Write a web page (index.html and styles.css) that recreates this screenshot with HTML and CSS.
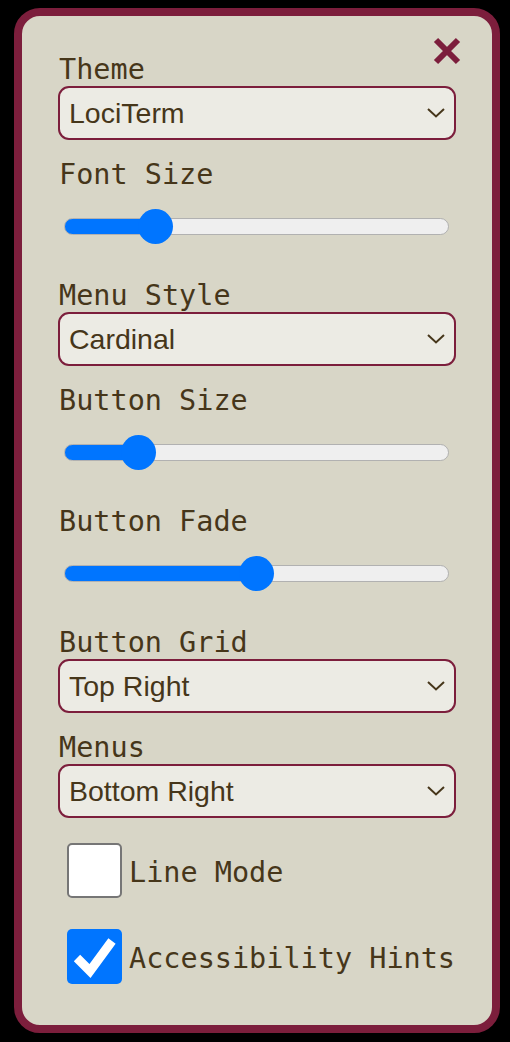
FILE: index.html
```html
<!DOCTYPE html>
<html lang="en">
<head>
  <meta charset="UTF-8">
  <title>Settings</title>
  <link rel="stylesheet" href="styles.css">
</head>
<body>
  <div class="panel">
    <button class="close" type="button" aria-label="Close">
      <svg width="28" height="28" viewBox="0 0 28 28">
        <path d="M3 3 L25 25 M25 3 L3 25" stroke="#7c1e3c" stroke-width="6" fill="none"/>
      </svg>
    </button>

    <div class="field">
      <label class="caption">Theme</label>
      <div class="select-wrap">
        <select class="select">
          <option>LociTerm</option>
        </select>
        <svg class="chevron" width="18" height="10" viewBox="0 0 18 10"><path d="M1 1 L9 8.5 L17 1" stroke="#46361a" stroke-width="2" fill="none"/></svg>
      </div>
    </div>

    <div class="field">
      <label class="caption">Font Size</label>
      <input class="slider" type="range" min="0" max="100" value="20.8" style="--fill:23.5%">
    </div>

    <div class="field">
      <label class="caption">Menu Style</label>
      <div class="select-wrap">
        <select class="select">
          <option>Cardinal</option>
        </select>
        <svg class="chevron" width="18" height="10" viewBox="0 0 18 10"><path d="M1 1 L9 8.5 L17 1" stroke="#46361a" stroke-width="2" fill="none"/></svg>
      </div>
    </div>

    <div class="field">
      <label class="caption">Button Size</label>
      <input class="slider" type="range" min="0" max="100" value="16.4" style="--fill:19.5%">
    </div>

    <div class="field">
      <label class="caption">Button Fade</label>
      <input class="slider" type="range" min="0" max="100" value="50.4" style="--fill:50.4%">
    </div>

    <div class="field">
      <label class="caption">Button Grid</label>
      <div class="select-wrap">
        <select class="select">
          <option>Top Right</option>
        </select>
        <svg class="chevron" width="18" height="10" viewBox="0 0 18 10"><path d="M1 1 L9 8.5 L17 1" stroke="#46361a" stroke-width="2" fill="none"/></svg>
      </div>
    </div>

    <div class="field">
      <label class="caption">Menus</label>
      <div class="select-wrap">
        <select class="select">
          <option>Bottom Right</option>
        </select>
        <svg class="chevron" width="18" height="10" viewBox="0 0 18 10"><path d="M1 1 L9 8.5 L17 1" stroke="#46361a" stroke-width="2" fill="none"/></svg>
      </div>
    </div>

    <div class="checks">
      <label class="check">
        <span class="box"></span>
        <span class="caption">Line Mode</span>
      </label>
      <label class="check">
        <span class="box on">
          <svg width="55" height="55" viewBox="0 0 55 55"><path d="M10 29 L23 42 L45 12" stroke="#fff" stroke-width="9" fill="none"/></svg>
        </span>
        <span class="caption">Accessibility Hints</span>
      </label>
    </div>
  </div>
</body>
</html>
```

FILE: styles.css
```css
body {
  margin: 0;
  padding: 8px 10px 0 14px;
  background-color: #000;
  font-family: 'DejaVu Sans Mono', monospace;
  color: #46361a;
}

.panel {
  position: relative;
  box-sizing: border-box;
  height: 1025px;
  background-color: #d8d6c7;
  border: 8px solid #7c1e3c;
  border-radius: 26px;
  padding: 37px 36px 0 36px;
  display: flex;
  flex-direction: column;
  gap: 18px;
}

.close {
  position: absolute;
  top: 21px;
  right: 31px;
  width: 28px;
  height: 28px;
  padding: 0;
  border: none;
  background: none;
}

.close svg {
  display: block;
}

.field {
  display: flex;
  flex-direction: column;
}

.caption {
  font-size: 28.5px;
  line-height: 33px;
  padding-left: 1px;
}

.select-wrap {
  position: relative;
}

.select {
  -webkit-appearance: none;
  appearance: none;
  display: block;
  width: 100%;
  height: 54px;
  margin: 0;
  padding: 0 40px 0 9px;
  border: 2px solid #7c1e3c;
  border-radius: 11px;
  background-color: #ecebe4;
  color: #46361a;
  font-family: 'Liberation Sans', Arial, sans-serif;
  font-size: 28.5px;
}

.chevron {
  position: absolute;
  right: 11px;
  top: 22px;
}

.slider {
  -webkit-appearance: none;
  appearance: none;
  display: block;
  height: 35px;
  margin: 18px 7px 17px 6px;
  padding: 0;
  background: transparent;
}

.slider::-webkit-slider-runnable-track {
  height: 17px;
  box-sizing: border-box;
  border-radius: 9px;
  border: 1px solid #b1b1b1;
  background: linear-gradient(to right, #0075ff var(--fill), #efefef var(--fill));
}

.slider::-webkit-slider-thumb {
  -webkit-appearance: none;
  width: 35px;
  height: 35px;
  margin-top: -10px;
  border-radius: 50%;
  background-color: #0075ff;
  border: none;
}

.checks {
  display: flex;
  flex-direction: column;
  gap: 31px;
  margin-top: 7px;
  padding-left: 9px;
}

.check {
  display: flex;
  align-items: center;
  gap: 6px;
}

.check .caption {
  padding-top: 3px;
}

.box {
  box-sizing: border-box;
  width: 55px;
  height: 55px;
  border: 2px solid #767676;
  border-radius: 5px;
  background-color: #fff;
}

.box.on {
  border: none;
  background-color: #0075ff;
}

.box svg {
  display: block;
}
```
